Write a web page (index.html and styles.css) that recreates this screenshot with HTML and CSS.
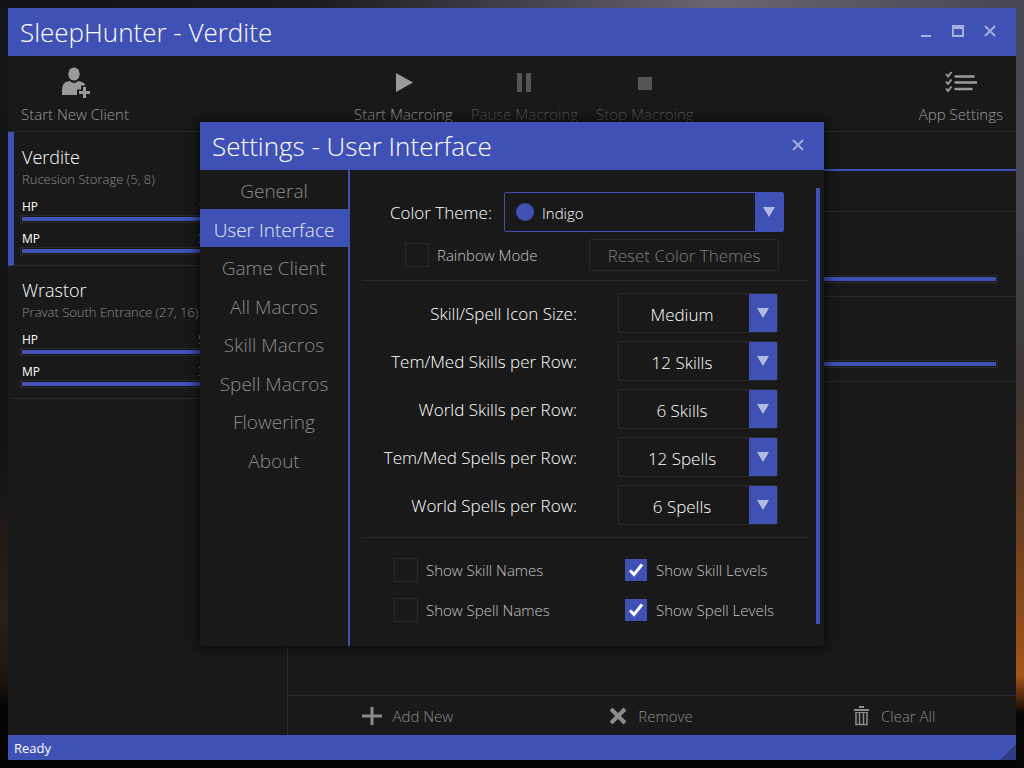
FILE: index.html
```html
<!DOCTYPE html>
<html lang="en">
<head>
<meta charset="utf-8">
<title>SleepHunter - Verdite</title>
<link rel="stylesheet" href="styles.css">
</head>
<body>
<div class="desktop">
  <div class="window">
    <header class="titlebar">
      <h1 class="title">SleepHunter - Verdite</h1>
      <div class="window-buttons">
        <button class="caption-button" aria-label="Minimize"><svg width="16" height="16" viewBox="0 0 16 16"><path d="M3 12h10" stroke="currentColor" stroke-width="2"/></svg></button>
        <button class="caption-button" aria-label="Maximize"><svg width="16" height="16" viewBox="0 0 16 16"><path fill="currentColor" fill-rule="evenodd" d="M2 1h12v12H2zM4 5v6h8V5z"/></svg></button>
        <button class="caption-button" aria-label="Close"><svg width="16" height="16" viewBox="0 0 16 16"><path d="M3 2l10 10M13 2L3 12" stroke="currentColor" stroke-width="2"/></svg></button>
      </div>
    </header>

    <nav class="toolbar">
      <button class="tool"><svg width="32" height="32" viewBox="0 0 32 32" fill="currentColor"><ellipse cx="15" cy="8" rx="5.7" ry="6.6"/><path d="M3 29c0-7 0-11 4-13l4-1c2 2.500 6 2.500 8 0l4 1c2 1 3 2 3.500 3.500H22v4h-4v5.500z"/><path d="M24 21h3v4h4v3h-4v4h-3v-4h-4v-3h4z"/></svg><span>Start New Client</span></button>
      <div class="tool-group">
        <button class="tool"><svg width="32" height="32" viewBox="0 0 32 32" fill="currentColor"><path d="M9 7l17 9.500L9 26z"/></svg><span>Start Macroing</span></button>
        <button class="tool" disabled><svg width="32" height="32" viewBox="0 0 32 32" fill="currentColor"><rect x="9" y="7" width="5" height="19" rx="1"/><rect x="18" y="7" width="5" height="19" rx="1"/></svg><span>Pause Macroing</span></button>
        <button class="tool" disabled><svg width="32" height="32" viewBox="0 0 32 32" fill="currentColor"><path d="M9 11h14v13H9z"/></svg><span>Stop Macroing</span></button>
      </div>
      <button class="tool"><svg width="32" height="32" viewBox="0 0 32 32" fill="none" stroke="currentColor"><path d="M1 8l2 2.500L6.500 6M1 15.500L3 18l3.500-4.500M1 22.500L3 25l3.500-4.500" stroke-width="2"/><path d="M10.500 10.500h18M10.500 16.500h21M10.500 23h16" stroke-width="2.500" stroke-linecap="round"/></svg><span>App Settings</span></button>
    </nav>

    <div class="workspace">
      <aside class="clients">
        <section class="client selected">
          <h2 class="client-name">Verdite</h2>
          <p class="client-place">Rucesion Storage (5, 8)</p>
          <div class="stat"><b>HP</b><span>1</span></div>
          <div class="bar"></div>
          <div class="stat"><b>MP</b><span>3</span></div>
          <div class="bar"></div>
        </section>
        <section class="client">
          <h2 class="client-name">Wrastor</h2>
          <p class="client-place">Pravat South Entrance (27, 16)</p>
          <div class="stat"><b>HP</b><span>5</span></div>
          <div class="bar"></div>
          <div class="stat"><b>MP</b><span>3</span></div>
          <div class="bar"></div>
        </section>
      </aside>
      <main class="content">
        <div class="tab-strip"></div>
        <div class="list-head"></div>
        <div class="list-row"><div class="bar"></div></div>
        <div class="list-row"><div class="bar"></div></div>
        <footer class="actions">
          <button class="action"><svg width="20" height="20" viewBox="0 0 20 20"><path d="M10 1v18M0 10h20" stroke="currentColor" stroke-width="3"/></svg>Add New</button>
          <button class="action"><svg width="20" height="20" viewBox="0 0 20 20"><path d="M3 3l14 14M17 3L3 17" stroke="currentColor" stroke-width="4"/></svg>Remove</button>
          <button class="action"><svg width="20" height="20" viewBox="0 0 20 20" fill="none" stroke="currentColor"><path d="M8 1h5M3 4h15" stroke-width="2"/><path d="M5 6v12.500h11V6M8.500 7v11M12.500 7v11" stroke-width="1.500"/><path d="M4 6.500h13" /></svg>Clear All</button>
        </footer>
      </main>
    </div>

    <footer class="status"><span>Ready</span><svg class="grip" width="16" height="16" viewBox="0 0 16 16"><path d="M16 0v16H0z" fill="#303c80"/></svg></footer>
  </div>

  <div class="dialog" role="dialog" aria-labelledby="dialog-title">
    <header class="titlebar">
      <h2 class="title" id="dialog-title">Settings - User Interface</h2>
      <div class="window-buttons">
        <button class="caption-button" aria-label="Close settings"><svg width="16" height="16" viewBox="0 0 16 16"><path d="M3 2l10 10M13 2L3 12" stroke="currentColor" stroke-width="2"/></svg></button>
      </div>
    </header>
    <div class="dialog-body">
      <nav class="pages">
        <button class="page">General</button>
        <button class="page current">User Interface</button>
        <button class="page">Game Client</button>
        <button class="page">All Macros</button>
        <button class="page">Skill Macros</button>
        <button class="page">Spell Macros</button>
        <button class="page">Flowering</button>
        <button class="page">About</button>
      </nav>
      <form class="settings">
        <div class="theme-row">
          <label class="label" for="theme">Color Theme:</label>
          <div class="select theme"><select id="theme"><option>Indigo</option></select><span class="swatch"></span><svg class="arrow" width="14" height="12" viewBox="0 0 14 12"><path d="M1 1h12L7 11z" fill="currentColor"/></svg></div>
        </div>
        <div class="rainbow-row">
          <label class="check"><input type="checkbox">Rainbow Mode</label>
          <button class="reset" type="button">Reset Color Themes</button>
        </div>
        <div class="options">
          <label class="label" for="icon-size">Skill/Spell Icon Size:</label>
          <div class="select"><select id="icon-size"><option>Medium</option></select><svg class="arrow" width="14" height="12" viewBox="0 0 14 12"><path d="M1 1h12L7 11z" fill="currentColor"/></svg></div>
          <label class="label" for="med-skills">Tem/Med Skills per Row:</label>
          <div class="select"><select id="med-skills"><option>12 Skills</option></select><svg class="arrow" width="14" height="12" viewBox="0 0 14 12"><path d="M1 1h12L7 11z" fill="currentColor"/></svg></div>
          <label class="label" for="world-skills">World Skills per Row:</label>
          <div class="select"><select id="world-skills"><option>6 Skills</option></select><svg class="arrow" width="14" height="12" viewBox="0 0 14 12"><path d="M1 1h12L7 11z" fill="currentColor"/></svg></div>
          <label class="label" for="med-spells">Tem/Med Spells per Row:</label>
          <div class="select"><select id="med-spells"><option>12 Spells</option></select><svg class="arrow" width="14" height="12" viewBox="0 0 14 12"><path d="M1 1h12L7 11z" fill="currentColor"/></svg></div>
          <label class="label" for="world-spells">World Spells per Row:</label>
          <div class="select"><select id="world-spells"><option>6 Spells</option></select><svg class="arrow" width="14" height="12" viewBox="0 0 14 12"><path d="M1 1h12L7 11z" fill="currentColor"/></svg></div>
        </div>
        <div class="checks">
          <label class="check"><input type="checkbox">Show Skill Names</label>
          <label class="check"><span class="box"><input type="checkbox" checked><svg width="14" height="14" viewBox="0 0 14 14"><path d="M1 7.500l4 4L13 1.500" fill="none" stroke="#fff" stroke-width="3"/></svg></span>Show Skill Levels</label>
          <label class="check"><input type="checkbox">Show Spell Names</label>
          <label class="check"><span class="box"><input type="checkbox" checked><svg width="14" height="14" viewBox="0 0 14 14"><path d="M1 7.500l4 4L13 1.500" fill="none" stroke="#fff" stroke-width="3"/></svg></span>Show Spell Levels</label>
        </div>
      </form>
      <div class="scroll-thumb"></div>
    </div>
  </div>
</div>
</body>
</html>
```

FILE: styles.css
```css
:root {
  --accent: #3f51b5;
  --panel: #191919;
  --line: #2a2a2a;
  --muted: #8c8c8c;
}

* { box-sizing: border-box; }

body {
  margin: 0;
  background: #050505;
  color: #fff;
  font-family: "Open Sans", "Noto Sans", sans-serif;
  font-weight: 300;
  font-size: 15px;
}

button, select, input { font: inherit; color: inherit; margin: 0; }
button { border: 0; padding: 0; background: none; }
h1, h2, p { margin: 0; font-weight: 300; }
svg { display: block; flex: none; }

.desktop {
  display: grid;
  min-height: 100vh;
  padding: 8px;
  background:
    linear-gradient(90deg, #101216, #191b20 30%, #6b6471 70%, #454652) top / 100% 8px no-repeat,
    linear-gradient(#15171b, #101114 55%, #2a2018 80%, #1c140f 89%, #040404 92%) left / 8px 100% no-repeat,
    linear-gradient(#454652, #494a57 25%, #3c3533 50%, #6d4020 70%, #a45518 88%, #2a1408 92%, #060606 93%) right / 8px 100% no-repeat,
    #040404;
}

.window, .dialog { grid-area: 1 / 1; }

.window {
  display: flex;
  flex-direction: column;
  background: var(--panel);
}

.titlebar {
  display: flex;
  align-items: center;
  justify-content: space-between;
  height: 48px;
  padding: 0 18px 0 12px;
  background: var(--accent);
}

.title { font-size: 26px; line-height: 50px; }
.window-buttons { display: flex; gap: 16px; color: #a5aedd; }
.caption-button { width: 16px; height: 16px; }

.toolbar {
  display: flex;
  justify-content: space-between;
  height: 76px;
  padding: 10px 13px 0;
  border-bottom: 1px solid var(--line);
  color: #9a9a9a;
}

.tool {
  display: flex;
  flex-direction: column;
  align-items: center;
  gap: 5px;
  line-height: 22px;
}

.tool:disabled { color: #555; }
.tool-group { display: flex; gap: 18px; }

.workspace {
  flex: 1;
  display: grid;
  grid-template-columns: 280px 1fr;
}

.clients { border-right: 1px solid var(--line); }

.client {
  padding: 12px 10px 10px 6px;
  border-left: 6px solid transparent;
  border-bottom: 1px solid var(--line);
}

.client + .client { padding-top: 11px; }
.client.selected { border-left-color: var(--accent); }
.client-name { padding-left: 2px; font-size: 18px; line-height: 26px; }

.client-place {
  margin-bottom: 10px;
  padding-left: 2px;
  font-size: 13px;
  line-height: 18px;
  color: var(--muted);
}

.stat {
  display: grid;
  grid-template-columns: 176px 1fr;
  padding-left: 2px;
  font-size: 12px;
  line-height: 17px;
}

.bar + .stat { margin-top: 7px; }
.stat b { font-weight: 400; }
.stat span { color: #bbb; }

.bar {
  height: 8px;
  padding: 1px;
  border: 1px solid var(--line);
  background: var(--accent) content-box;
}

.content { display: flex; flex-direction: column; }
.tab-strip { height: 39px; border-bottom: 2px solid var(--accent); }
.list-head { height: 41px; border-bottom: 1px solid var(--line); }
.list-row { height: 85px; padding: 63px 18px 0; border-bottom: 1px solid var(--line); }

.actions {
  display: grid;
  grid-template-columns: 1fr 1fr 1fr;
  height: 40px;
  margin-top: auto;
  border-top: 1px solid var(--line);
  color: var(--muted);
}

.action {
  display: flex;
  align-items: center;
  justify-content: center;
  gap: 10px;
  padding-right: 3px;
}

.status {
  display: flex;
  justify-content: space-between;
  align-items: end;
  height: 25px;
  padding-left: 6px;
  background: var(--accent);
  font-size: 13px;
  line-height: 24px;
  font-weight: 400;
}

.dialog {
  place-self: center;
  z-index: 1;
  width: 624px;
  max-width: 100%;
  background: var(--panel);
  box-shadow: 0 0 10px 3px rgba(0, 0, 0, 0.6);
}

.dialog-body {
  display: grid;
  grid-template-columns: 150px 1fr 4px;
  padding-right: 4px;
}

.pages {
  display: grid;
  grid-auto-rows: 39px 38px;
  align-content: start;
  border-right: 2px solid var(--accent);
}

.page {
  padding-top: 3px;
  font-size: 19px;
  line-height: 34px;
  color: var(--muted);
}

.page.current { background: var(--accent); color: #e8eaf6; }
.settings { padding: 22px 8px 24px 12px; }
.label { font-size: 17px; text-align: right; }

.theme-row {
  display: grid;
  grid-template-columns: 130px 280px;
  gap: 12px;
  align-items: center;
}

.select {
  display: grid;
  grid-template-columns: 1fr 28px;
  align-items: center;
  height: 40px;
  border: 1px solid var(--line);
  border-radius: 2px;
  background: linear-gradient(var(--accent), var(--accent)) right / 28px 100% no-repeat;
}

.select select {
  grid-area: 1 / 1 / 2 / -1;
  appearance: none;
  width: 100%;
  height: 38px;
  padding: 2px 32px 0 0;
  border: 0;
  background: none;
  font-size: 17px;
  text-align-last: center;
}

.arrow {
  grid-area: 1 / -2;
  justify-self: center;
  color: #b4bbe2;
  pointer-events: none;
}

.theme {
  grid-template-columns: 40px 1fr 28px;
  border-color: var(--accent);
}

.theme select { padding-left: 37px; font-size: 15px; text-align-last: left; }

.swatch {
  grid-area: 1 / 1;
  justify-self: center;
  width: 18px;
  height: 18px;
  border-radius: 50%;
  background: var(--accent);
  pointer-events: none;
}

.rainbow-row {
  display: flex;
  justify-content: space-between;
  align-items: center;
  margin-top: 7px;
  padding: 0 29px 9px 43px;
  border-bottom: 1px solid var(--line);
}

.reset {
  width: 190px;
  height: 32px;
  border: 1px solid var(--line);
  border-radius: 2px;
  color: #7c7c7c;
  font-size: 17px;
}

.options {
  display: grid;
  grid-template-columns: 215px 160px;
  gap: 8px 41px;
  align-items: center;
  padding: 12px 0;
  border-bottom: 1px solid var(--line);
}

.check { display: flex; align-items: center; gap: 8px; color: #c4c4c4; }

.check input {
  appearance: none;
  width: 24px;
  height: 24px;
  border: 1px solid var(--line);
}

.box { display: grid; place-items: center; width: 24px; height: 24px; }
.box input, .box svg { grid-area: 1 / 1; }
.box svg { pointer-events: none; z-index: 1; }
.box input { width: 22px; height: 22px; border: 0; background: var(--accent); }

.checks {
  display: grid;
  grid-template-columns: 198px 1fr;
  gap: 16px 32px;
  padding: 20px 0 0 32px;
}

.scroll-thumb { margin: 18px 0 22px; background: var(--accent); }
```
